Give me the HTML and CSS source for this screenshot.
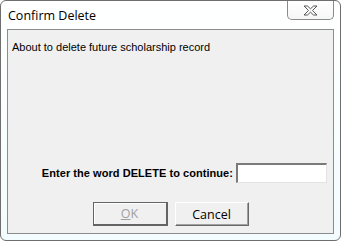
FILE: index.html
```html
<!DOCTYPE html>
<html>
<head>
<meta charset="utf-8">
<link rel="stylesheet" href="styles.css">
</head>
<body>
<div class="frame">
  <div class="titlebar">
    <span class="title">Confirm Delete</span>
    <div class="close">
      <svg width="15" height="11" viewBox="0 0 15 11">
        <polygon points="1,1 4.5,1 7.5,3.8 10.5,1 14,1 9.5,5.5 14,10 10.5,10 7.5,7.2 4.5,10 1,10 5.5,5.5" fill="#fbfbfb" stroke="#555" stroke-width="1" stroke-linejoin="round"/>
      </svg>
    </div>
  </div>
  <div class="panel">
    <div class="message">About to delete future scholarship record</div>
    <div class="spacer"></div>
    <div class="entry">
      <span class="label">Enter the word DELETE to continue:</span>
      <div class="input"></div>
    </div>
    <div class="buttons">
      <div class="btn btn-ok"><span class="ul">O</span>K</div>
      <div class="btn btn-cancel">Cancel</div>
    </div>
  </div>
</div>
</body>
</html>
```
FILE: styles.css
```css
html, body {
  margin: 0;
  padding: 0;
  background: #ffffff;
}
.frame {
  box-sizing: border-box;
  width: 341px;
  height: 241px;
  border: 1px solid #6e6e6e;
  border-radius: 6px;
  background: linear-gradient(#ffffff, #f3fcfe);
  padding: 0 6px 6px 6px;
  display: flex;
  flex-direction: column;
}
.titlebar {
  height: 28px;
  display: flex;
  justify-content: space-between;
  align-items: flex-start;
}
.title {
  font-family: "Open Sans", "Noto Sans", sans-serif;
  font-size: 12.5px;
  color: #000;
  margin-left: 1px;
  margin-top: 7px;
  line-height: 16px;
}
.close {
  box-sizing: border-box;
  width: 47px;
  height: 19px;
  border: 1px solid #8a8a8a;
  border-top: none;
  border-radius: 0 0 5px 5px;
  background: linear-gradient(#ffffff, #f6f6f6);
  display: flex;
  align-items: center;
  justify-content: center;
}
.panel {
  box-sizing: border-box;
  flex: 1;
  border: 1px solid #8c8c8c;
  background: #f0f0f0;
  display: flex;
  flex-direction: column;
}
.message {
  font-family: "Liberation Sans", Arial, sans-serif;
  font-size: 11px;
  color: #000;
  margin: 10px 0 0 4px;
  line-height: 14px;
}
.spacer {
  flex: 1;
}
.entry {
  display: flex;
  justify-content: flex-end;
  align-items: center;
  margin-right: 6px;
}
.label {
  font-family: "Liberation Sans", Arial, sans-serif;
  font-weight: bold;
  font-size: 11px;
  letter-spacing: 0.05px;
  color: #000;
  margin-right: 3px;
}
.input {
  box-sizing: border-box;
  width: 91px;
  height: 20px;
  background: #fff;
  border-top: 2px solid #7a7a7a;
  border-left: 2px solid #7a7a7a;
  border-right: 1px solid #e3e3e3;
  border-bottom: 1px solid #e3e3e3;
}
.buttons {
  display: flex;
  justify-content: center;
  gap: 7px;
  margin-top: 19px;
  margin-bottom: 7px;
}
.btn {
  box-sizing: border-box;
  width: 75px;
  height: 24px;
  background: #f0f0f0;
  font-family: "Open Sans", "Noto Sans", sans-serif;
  font-size: 12.5px;
  display: flex;
  align-items: center;
  justify-content: center;
}
.btn-ok {
  color: #a0a0a0;
  border-top: 1px solid #646464;
  border-left: 1px solid #646464;
  border-right: 2px solid #646464;
  border-bottom: 2px solid #646464;
  box-shadow: inset 1px 1px 0 #fff;
}
.btn-cancel {
  color: #000;
  width: 74px;
  border-top: 1px solid #fff;
  border-left: 1px solid #fff;
  border-right: 1px solid #696969;
  border-bottom: 1px solid #696969;
  box-shadow: inset -1px -1px 0 #a0a0a0;
}
.ul {
  text-decoration: underline;
}
```
